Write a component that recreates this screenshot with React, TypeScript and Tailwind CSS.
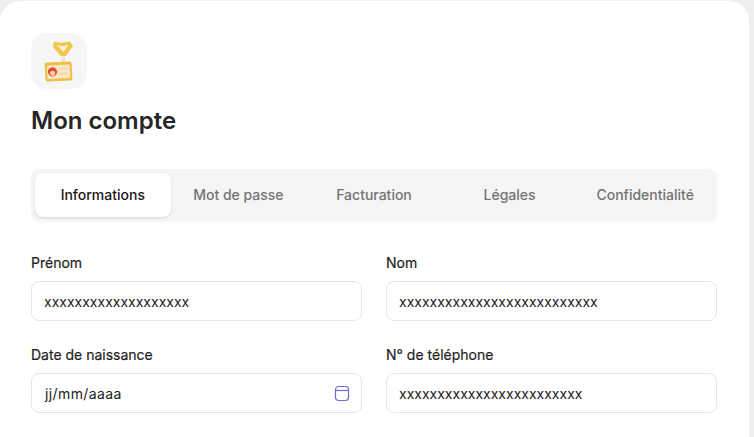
export default function App() {
  const tabs = ["Informations", "Mot de passe", "Facturation", "Légales", "Confidentialité"];
  const inputBox = "h-10 rounded-lg border border-[#e5e5e5] bg-white pl-3 pr-3 flex items-center justify-between text-[14px] text-[#222]";
  const label = "block h-[20px] leading-[20px] text-[14px] font-normal [-webkit-text-stroke:0.2px_#1f1f1f] text-[#1f1f1f] mb-[8px]";
  return (
    <div className="w-[754px] h-[437px] overflow-hidden bg-[#efefef] pt-[1px]" style={{ fontFamily: "Inter, sans-serif" }}>
      <div className="w-[749px] h-[436px] bg-white rounded-t-[20px] pl-[31px] pt-[32px] pr-[32px]">
        <div className="w-14 h-14 rounded-2xl bg-[#f6f6f6] flex items-center justify-center">
          <svg width="30" height="44" viewBox="0 0 30 44">
            <path d="M10 2.5 C14 4 19 4 26 2.5 L29 7 L22 17 L17 17 L9 8 Z" fill="#f0c650" />
            <path d="M13 6 C16 7.5 20 7.5 24 6 L19.5 13 Z" fill="#fdf6dc" />
            <path d="M17 17 L21 17 L20.5 25 L17.5 25 Z" fill="#efe6d4" />
            <g transform="rotate(-3 15 32)">
              <rect x="1" y="23" width="27" height="19" rx="2.5" fill="#f0bd45" />
              <rect x="3" y="26" width="23" height="13.5" rx="1.5" fill="#f7e7c3" />
              <circle cx="8.5" cy="32.5" r="4.6" fill="#e2492f" />
              <circle cx="8.5" cy="34" r="2.6" fill="#f6cfa8" />
              <rect x="15" y="29" width="9" height="2" fill="#f1dcae" />
              <rect x="15" y="34" width="9" height="2" fill="#f1dcae" />
            </g>
          </svg>
        </div>
        <h1 className="mt-[16px] text-[24px] leading-[32px] font-semibold text-[#262626]">Mon compte</h1>
        <div className="mt-[32px] h-[52px] p-1 rounded-lg bg-[#f5f5f5] flex shadow-[0_1px_3px_rgba(0,0,0,0.03)]">
          {tabs.map((t, i) => (
            <div
              key={t}
              className={
                i === 0
                  ? "flex-1 flex items-center justify-center pb-[1px] rounded-lg bg-white shadow-sm text-[14px] font-medium text-[#171717]"
                  : "flex-1 flex items-center justify-center pb-[1px] text-[14px] font-medium text-[#737373]"
              }
            >
              {t}
            </div>
          ))}
        </div>
        <div className="mt-[32px] grid grid-cols-2 gap-x-6 gap-y-6">
          <div>
            <label className={label}>Prénom</label>
            <div className={inputBox}>xxxxxxxxxxxxxxxxxxx</div>
          </div>
          <div>
            <label className={label}>Nom</label>
            <div className={inputBox}>xxxxxxxxxxxxxxxxxxxxxxxxxx</div>
          </div>
          <div>
            <label className={label}>Date de naissance</label>
            <div className={inputBox}>
              <span className="ml-px tracking-[0.4px]">jj/mm/aaaa</span>
              <svg width="16" height="17" viewBox="0 0 16 17" fill="none" stroke="#6f6fd0" strokeWidth="1.2" className="-mr-px">
                <rect x="1.5" y="1.5" width="13" height="14" rx="3" />
                <path d="M1.5 5.5h13" />
              </svg>
            </div>
          </div>
          <div>
            <label className={label}>N° de téléphone</label>
            <div className={inputBox}>xxxxxxxxxxxxxxxxxxxxxxxx</div>
          </div>
        </div>
      </div>
    </div>
  );
}
